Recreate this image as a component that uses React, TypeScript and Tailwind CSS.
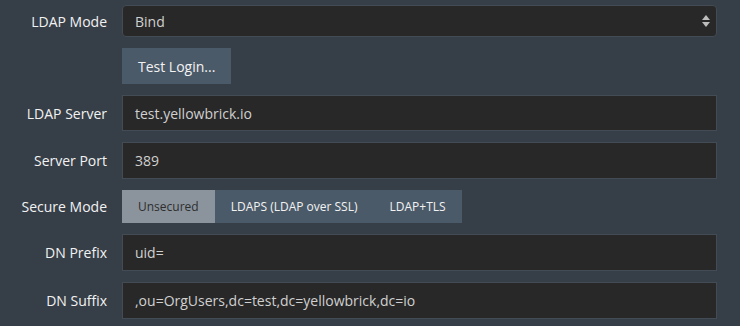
import React from 'react'

const font = { fontFamily: '"Open Sans", "Liberation Sans", sans-serif' }

function Label({ children }: { children: React.ReactNode }) {
  return (
    <div className="flex items-center justify-end text-[14px] text-[#f2f2f2]">{children}</div>
  )
}

function TextField({ value, h = 'h-[37px]' }: { value: string; h?: string }) {
  return (
    <div
      className={`flex ${h} items-center border border-[#434b54] bg-[#282828] px-3 text-[14px] text-[#d0d0d0]`}
    >
      {value}
    </div>
  )
}

function SelectArrows() {
  return (
    <svg width="8" height="12" viewBox="0 0 8 12" className="text-[#bdbdbd]">
      <path d="M4 0 L8 5 H0 Z" fill="currentColor" />
      <path d="M4 12 L8 7 H0 Z" fill="currentColor" />
    </svg>
  )
}

export default function App() {
  const modes = ['Unsecured', 'LDAPS (LDAP over SSL)', 'LDAP+TLS']
  return (
    <div className="h-[326px] w-[740px] bg-[#363e47] pt-[5px] pr-[23px]" style={font}>
      <div className="grid grid-cols-[107px_1fr] gap-x-[15px] gap-y-[11px]">
        <Label>LDAP Mode</Label>
        <div className="flex h-[32px] items-center justify-between rounded-[4px] border border-[#434b54] bg-[#282828] pr-[6px] pl-3 text-[14px] text-[#d0d0d0]">
          <span>Bind</span>
          <SelectArrows />
        </div>

        <div />
        <div className="flex">
          <button className="h-[36px] bg-[#4b5a69] px-[16px] text-[14px] text-[#f2f2f2]">
            Test Login...
          </button>
        </div>

        <Label>LDAP Server</Label>
        <TextField value="test.yellowbrick.io" h="h-[36px]" />

        <Label>Server Port</Label>
        <TextField value="389" />

        <Label>Secure Mode</Label>
        <div className="flex h-[33px] text-[12px]">
          {modes.map((m, i) => (
            <div
              key={m}
              className={
                i === 0
                  ? 'flex items-center bg-[#8b949d] px-4 text-[#2e2e2e]'
                  : 'flex items-center bg-[#4b5a69] px-4 text-[#f2f2f2]'
              }
            >
              {m}
            </div>
          ))}
        </div>

        <Label>DN Prefix</Label>
        <TextField value="uid=" />

        <Label>DN Suffix</Label>
        <TextField value=",ou=OrgUsers,dc=test,dc=yellowbrick,dc=io" />
      </div>
    </div>
  )
}
